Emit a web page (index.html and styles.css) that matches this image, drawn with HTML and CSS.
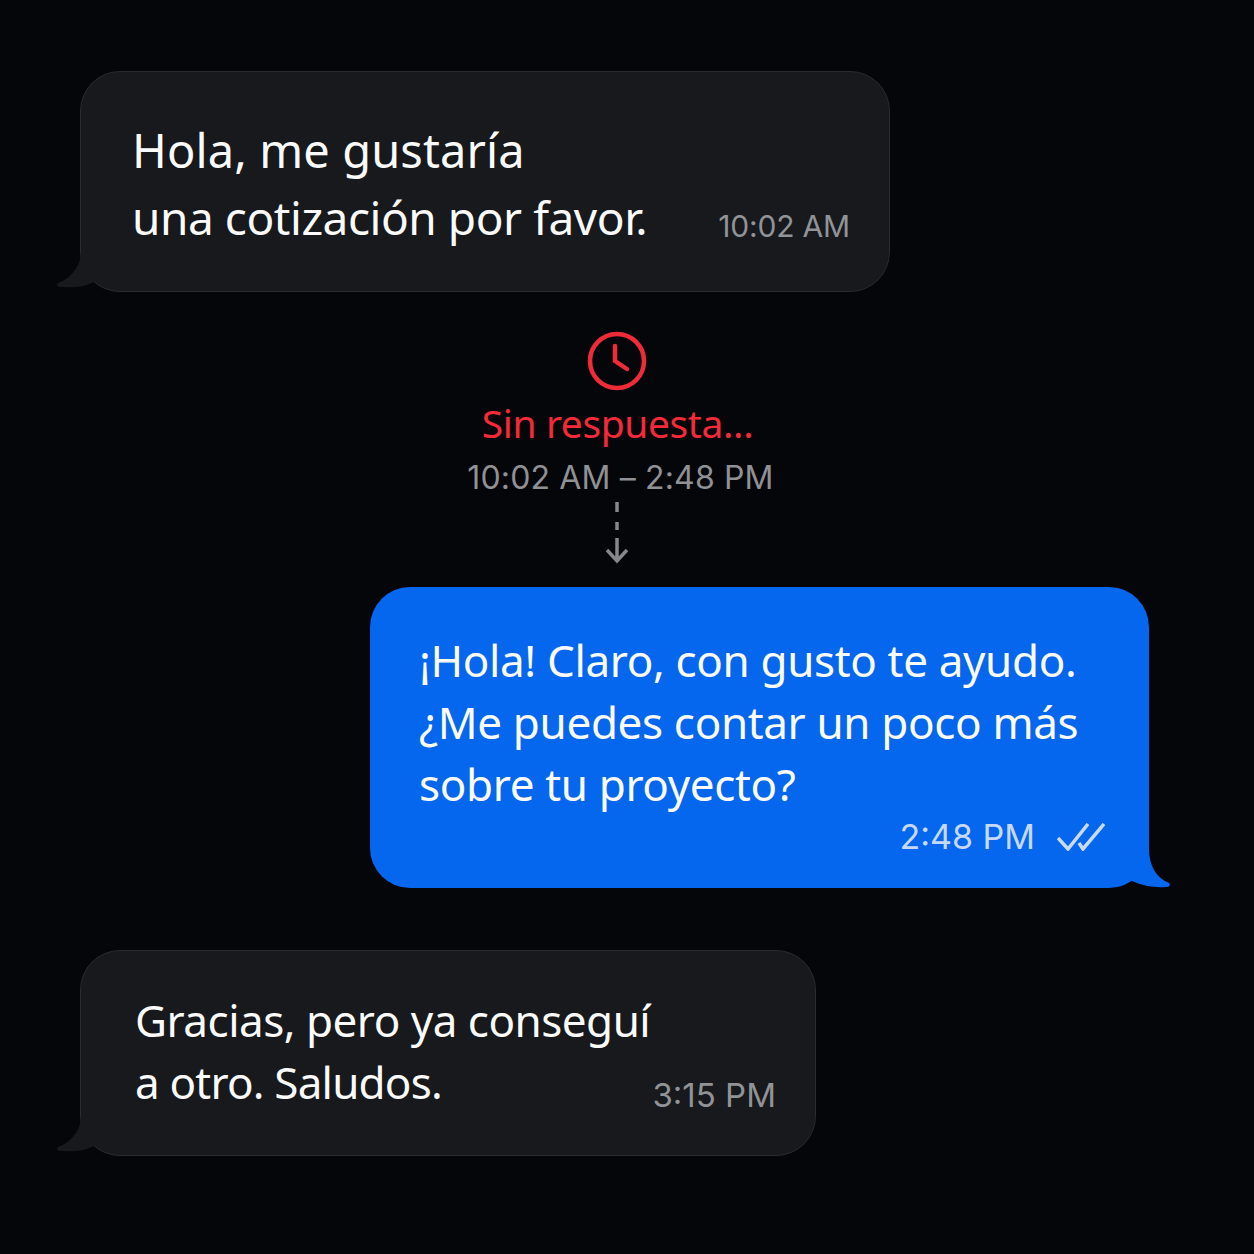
FILE: index.html
```html
<!DOCTYPE html>
<html lang="es">
<head>
<meta charset="utf-8">
<title>Conversación</title>
<link rel="stylesheet" href="styles.css">
</head>
<body>
<main class="thread">
  <section class="bubble incoming first">
    <svg class="tail tail-left" viewBox="0 0 60 40" aria-hidden="true"><path class="tail-fill" d="M24 0 C24 13 15 26 1 31 C-1 33 1 35 4 35 C15 36 27 35 37 30 L60 20 L60 0 Z"/></svg>
    <p class="body"><span class="line greeting">Hola, me gustaría</span><span class="line request">una cotización por favor.</span></p>
    <span class="time">10:02 AM</span>
  </section>

  <section class="gap-note">
    <svg class="clock" viewBox="0 0 60 60" aria-hidden="true"><circle cx="30" cy="30" r="27"/><path d="M28 15 V30 L40 38"/></svg>
    <div class="wait">Sin respuesta...</div>
    <div class="range">10:02 AM – 2:48 PM</div>
    <svg class="arrow" viewBox="0 0 24 64" aria-hidden="true"><path d="M12 2 V12 M12 22 V30 M12 38 V61 M2 50 L12 61 L22 50"/></svg>
  </section>

  <section class="bubble outgoing">
    <p class="body"><span class="line">¡Hola! Claro, con gusto te ayudo.</span><span class="line">¿Me puedes contar un poco más</span><span class="line">sobre tu proyecto?</span></p>
    <div class="meta">
      <span class="time">2:48 PM</span>
      <svg class="ticks" viewBox="0 0 48 28" aria-hidden="true"><path d="M1 15 L11 26 L31 1"/><path d="M22 20 L26 26 L47 1"/></svg>
    </div>
    <svg class="tail tail-right" viewBox="0 0 60 40" aria-hidden="true"><path class="tail-fill" d="M39 0 C39 16 46 29 59 34 C61 36 59 38 56 38 C46 39 33 37 22 32 L0 20 L0 0 Z"/></svg>
  </section>

  <section class="bubble incoming last">
    <svg class="tail tail-left" viewBox="0 0 60 40" aria-hidden="true"><path class="tail-fill" d="M24 0 C24 13 15 26 1 31 C-1 33 1 35 4 35 C15 36 27 35 37 30 L60 20 L60 0 Z"/></svg>
    <p class="body"><span class="line opening">Gracias, pero ya conseguí</span><span class="line farewell">a otro. Saludos.</span></p>
    <span class="time">3:15 PM</span>
  </section>
</main>
</body>
</html>
```
FILE: styles.css
```css
* { box-sizing: border-box; }

html, body {
  margin: 0;
  height: 100%;
}

body {
  background: #05060a;
  color: #fff;
  font-family: "Noto Sans", sans-serif;
}

.thread {
  display: flex;
  flex-direction: column;
  align-items: flex-start;
  padding: 71px 105px 0 80px;
}

.bubble {
  position: relative;
  display: flex;
  border-radius: 40px;
}

.body {
  margin: 0;
  align-self: flex-start;
  font-size: 44px;
  line-height: 62px;
  color: #fbfbfb;
}

.line {
  display: block;
  white-space: nowrap;
}

.time {
  font-family: Inter, sans-serif;
  font-size: 32px;
  line-height: 40px;
  white-space: nowrap;
  color: #919397;
}

.incoming {
  background: #17191c;
  border: 1px solid #292b2f;
  justify-content: space-between;
  align-items: flex-end;
}

.first {
  width: 810px;
  height: 221px;
  padding: 45px 39px 36px 51px;
}

.first .body { font-size: 46px; line-height: 67px; }
.first .time { font-size: 30px; letter-spacing: -0.2px; margin-bottom: 9px; }
.greeting { font-size: 47px; letter-spacing: 0.1px; }
.request { letter-spacing: -0.45px; }

.last {
  width: 736px;
  height: 206px;
  margin-top: 62px;
  padding: 38px 39px 40px 54px;
}

.last .time { font-size: 33px; }
.opening { letter-spacing: -0.5px; }
.farewell { letter-spacing: -0.8px; }

.outgoing {
  align-self: flex-end;
  flex-direction: column;
  width: 779px;
  height: 301px;
  margin-top: 23px;
  padding: 42px 44px 0 49px;
  background: #0566ee;
}

.outgoing .body { letter-spacing: -0.35px; }

.meta {
  display: flex;
  justify-content: flex-end;
  align-items: center;
  gap: 22px;
  margin-top: 2px;
}

.outgoing .time { color: #c6d9fb; font-size: 34px; }

.ticks {
  width: 48px;
  height: 28px;
  fill: none;
  stroke: #c9dafa;
  stroke-width: 3.5;
}

.tail {
  position: absolute;
  bottom: -1px;
  width: 60px;
  height: 40px;
}

.tail-left { left: -24px; }
.tail-right { right: -21px; }
.incoming .tail-fill { fill: #17191c; }
.outgoing .tail-fill { fill: #0566ee; }

.gap-note {
  align-self: center;
  display: flex;
  flex-direction: column;
  align-items: center;
  margin: 39px 0 0 6px;
}

.clock {
  width: 60px;
  height: 60px;
  fill: none;
  stroke: #ef2a39;
  stroke-width: 4.5;
  stroke-linecap: round;
  stroke-linejoin: round;
}

.wait {
  margin-top: 7px;
  font-size: 39px;
  line-height: 50px;
  letter-spacing: -0.4px;
  color: #f52a38;
}

.range {
  margin: 7px 0 0 6px;
  font-family: Inter, sans-serif;
  font-size: 32px;
  line-height: 46px;
  letter-spacing: 0.15px;
  color: #8f9195;
}

.arrow {
  width: 24px;
  height: 64px;
  margin-top: -1px;
  fill: none;
  stroke: #85878b;
  stroke-width: 3.5;
}
```
